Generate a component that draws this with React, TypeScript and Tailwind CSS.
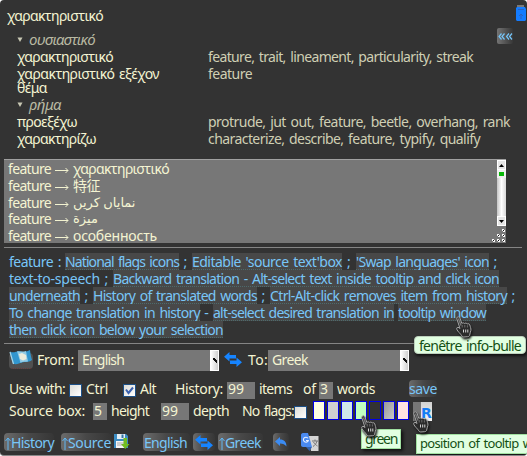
import { useLayoutEffect, useRef } from "react";
import type { ReactNode } from "react";

/** One line of text, tracked so that it fills the width of its box. */
function Fit({ className = "", children }: { className?: string; children: string }) {
  const box = useRef<HTMLSpanElement>(null);
  const inner = useRef<HTMLSpanElement>(null);
  useLayoutEffect(() => {
    const b = box.current;
    const t = inner.current;
    if (!b || !t) return;
    t.style.letterSpacing = "0px";
    const gap = b.getBoundingClientRect().width - t.getBoundingClientRect().width;
    t.style.letterSpacing = `${gap / children.length}px`;
  }, [children]);
  return (
    <span ref={box} className={`block h-[17px] shrink-0 whitespace-pre leading-[17px] [word-spacing:1.5px] ${className}`}>
      <span ref={inner}>{children}</span>
    </span>
  );
}

function Entry({ word, width, children }: { word: string; width: string; children?: ReactNode }) {
  return (
    <div className="flex h-[17px] pl-[17px]">
      <div className="w-[191px] shrink-0">
        <Fit className={width}>{word}</Fit>
      </div>
      <div className="text-[#cfcfb4]">{children}</div>
    </div>
  );
}

function Group({ name, width }: { name: string; width: string }) {
  return (
    <div className="flex h-[17px] items-center pl-[17px] text-[#b9b9a2]">
      <svg className="mr-[6px] h-[5px] w-[6px]" viewBox="0 0 6 5">
        <path d="M.5 .5h5L3 5z" fill="#c8c8b4" />
      </svg>
      <Fit className={`text-[15px] italic ${width}`}>{name}</Fit>
    </div>
  );
}

function HistoryLine({ children }: { children: ReactNode }) {
  return (
    <div className="flex h-[16.8px] items-start pl-1">
      <Fit className="w-[43px]">feature</Fit>
      <svg className="mt-[6px] mr-1 ml-1 h-[8px] w-[14px] shrink-0" viewBox="0 0 14 8">
        <path d="M0 4.5h13M10.500 2l2.500 2.500L10.500 7" fill="none" stroke="#f2f2d0" />
      </svg>
      {children}
    </div>
  );
}

function Mark({ width, children }: { width: string; children: string }) {
  return (
    <Fit className={`border-b border-dotted border-[#4d6a6c] bg-[#484848] ${width}`}>{children}</Fit>
  );
}

function Sep({ width, children }: { width: string; children: string }) {
  return <span className={`block h-[17px] shrink-0 text-center leading-[17px] ${width}`}>{children}</span>;
}

function Swap({ className = "" }: { className?: string }) {
  return (
    <svg className={`h-[15px] w-[18px] shrink-0 ${className}`} viewBox="0 0 18 15">
      <path d="M0 4.8 5.5 0v3H12v3.6H5.5v3z" fill="#1684ff" />
      <path d="M18 10.2 12.5 5.4v3H6V12h6.5v3z" fill="#1684ff" />
    </svg>
  );
}

function Check({ on = false }: { on?: boolean }) {
  return (
    <span className="block size-[13px] shrink-0 border border-[#1c4f86] bg-linear-to-br from-[#dcdcd8] to-white">
      {on && (
        <svg className="size-[11px]" viewBox="0 0 11 11">
          <path d="M2 4.5 4.5 8 9 2.5" fill="none" stroke="#3a62b0" strokeWidth="2" />
        </svg>
      )}
    </span>
  );
}

function Picker({ label, width }: { label: string; width: string }) {
  return (
    <div className="flex h-[21px] w-[141px] shrink-0 bg-[#777] pl-1">
      <div className="flex-1 pt-px">
        <Fit className={width}>{label}</Fit>
      </div>
      <div className="flex w-[9px] items-center justify-center border border-white bg-linear-to-r from-white to-[#d0d0d0]">
        <svg className="h-[5px] w-[4px]" viewBox="0 0 4 5">
          <path d="M0 0h2v1h1v1h1v3H3V4H2V3H1V2H0z" fill="#111" />
        </svg>
      </div>
    </div>
  );
}

function Field({ width, textWidth, children }: { width: string; textWidth: string; children: string }) {
  return (
    <div className={`h-[17px] shrink-0 bg-[#777] pl-px ${width}`}>
      <Fit className={textWidth}>{children}</Fit>
    </div>
  );
}

const chip =
  "flex shrink-0 items-center rounded-[4px] bg-linear-to-r from-[#6c6c6c] via-[#484848] to-[#363636] text-[#78c6f8]";

function Button({ width, textWidth, up = false, children }: { width: string; textWidth: string; up?: boolean; children: string }) {
  return (
    <div className={`${chip} h-[18px] pl-px ${width}`}>
      {up && (
        <svg className="mt-[2px] h-[13px] w-[6px] shrink-0" viewBox="0 0 6 13">
          <path d="M3 13V1M.5 4 3 1l2.5 3" fill="none" stroke="#62b8f4" />
        </svg>
      )}
      <Fit className={textWidth}>{children}</Fit>
    </div>
  );
}

function Hand({ className }: { className: string }) {
  return (
    <svg className={`absolute h-[22px] w-[17px] drop-shadow-[1px_2px_1px_#111] ${className}`} viewBox="0 0 17 22">
      <path
        d="M1.3 1.2c1-.8 2.2-.2 2.6.9l2 5.4c.8-.9 2.1-.8 2.7.1.9-.8 2.1-.5 2.6.4 1-.6 2.3-.2 2.6 1 .5 1.700 1.400 3.600 1.100 5.400-.3 2-1.200 2.900-1.200 4.600 0 1-.8 1.500-2 1.700l-4 .3c-1 0-1.500-.4-1.900-1.200C4.500 17.500 1.600 15.700.8 13.300c-.5-1.500.8-2.600 2.200-1.600l1 .8L1 3.400c-.3-.9-.3-1.700.3-2.200z"
        fill="#2b2b2b"
        stroke="#a8a8a8"
        strokeWidth="1"
      />
      <path d="M6.200 9v2.500M8.800 9v2.500M11.400 9.300v2.200" stroke="#888" strokeWidth=".7" />
      <path d="M7.500 13.500v3M9.700 13.500v3M11.800 13.500v3" stroke="#e8e8e8" strokeWidth=".9" />
      <path d="m2.400 2.500 2.600 7" stroke="#777" strokeWidth="1.400" />
    </svg>
  );
}

function FlagIcon() {
  return (
    <svg className="h-[20px] w-[24px] shrink-0" viewBox="0 0 24 20">
      <rect y="3" width="24" height="16" rx="4" fill="#505050" />
      <path d="M3 18.500h20" stroke="#703030" strokeWidth=".7" strokeDasharray="1 1" />
      <path d="M1 1.500C5 4 8 0 12 1.500S18 1 21 0c.4 4 1.200 7 2 10-4 3-7 1.500-10 2.500S7 15 4 13.500C2.500 10 1.500 6 1 1.500z" fill="#3296ce" />
      <path d="M8 1.300C12 1.500 14 2 17 1l2 10.500c-3 .5-5 0-7.500 1.200z" fill="#91cbe5" />
      <path d="m10 4 3-1 4 2 .5 4-3.500 1.500-3-1.500z" fill="#ececdc" />
      <path d="m1 2 3.500 12" stroke="#a9d5e6" strokeWidth="1.200" />
    </svg>
  );
}

function DiskIcon() {
  return (
    <svg className="h-[17px] w-[16px] shrink-0" viewBox="0 0 16 17">
      <path d="M0 1h12l2 2v12H0z" fill="#3c8cc2" />
      <path d="M3 1h8v5H3z" fill="#e4eef5" />
      <path d="M7.500 1.500h2v3.500h-2z" fill="#3474a4" />
      <path d="M2 8h10v7H2z" fill="#f5f5f5" />
      <path d="M3 10h7M3 12h7" stroke="#aaa" />
      <path d="M9.500 5h3.500v6h2.500L11.200 16 7 11h2.500z" fill="#72bd22" />
    </svg>
  );
}

function TranslateIcon() {
  return (
    <svg className="h-[19px] w-[18px] shrink-0" viewBox="0 0 18 19">
      <path d="M7 3h10.500v15H10z" fill="#d5d5d5" />
      <path d="M11 8h6M14 6.500V8M16 8c-.8 3-2.500 4.500-4 5.500M12.500 9c1 2 2.500 3 4 4" fill="none" stroke="#777" />
      <path d="M0 2c0-1 .7-2 2-2h5l4 14H2c-1.200 0-2-.7-2-2z" fill="#4a8af0" />
      <path d="m5 14 6 0-2.500 4z" fill="#3463ad" />
      <path d="M7 5.300A2.500 2.500 0 1 0 7.300 7.500H5" fill="none" stroke="#e8f0ff" strokeWidth="1.100" />
    </svg>
  );
}

function Swatch({ className }: { className: string }) {
  return <span className={`block h-[19px] w-[12px] shrink-0 border border-[#0000e8] ${className}`} />;
}

export default function App() {
  return (
    <div className="relative flex h-[456px] w-[527px] flex-col overflow-hidden rounded-[4px] border-b border-[#888] bg-[#333] font-['Noto_Sans','Noto_Sans_CJK_SC','DejaVu_Sans',sans-serif] text-[14px] text-[#f4f4d2]">
      <div className="h-[159px] shrink-0 pt-[7px]">
        <div className="h-6 pl-[7px]">
          <Fit className="w-[96px]">χαρακτηριστικό</Fit>
        </div>
        <Group name="ουσιαστικό" width="w-[66px]" />
        <Entry word="χαρακτηριστικό" width="w-[96px]">
          <Fit className="w-[265px]">feature, trait, lineament, particularity, streak</Fit>
        </Entry>
        <Entry word="χαρακτηριστικό εξέχον" width="w-[142px]">
          <Fit className="w-[44px]">feature</Fit>
        </Entry>
        <div className="-mt-[3px]">
          <Entry word="θέμα" width="w-[30px]" />
        </div>
        <Group name="ρήμα" width="w-[32px]" />
        <Entry word="προεξέχω" width="w-[60px]">
          <Fit className="w-[302px]">protrude, jut out, feature, beetle, overhang, rank</Fit>
        </Entry>
        <Entry word="χαρακτηρίζω" width="w-[79px]">
          <Fit className="w-[272px]">characterize, describe, feature, typify, qualify</Fit>
        </Entry>
      </div>

      <div className="ml-1 flex h-[84px] w-[502px] shrink-0 border-t border-[#a0a0a0] bg-[#777]">
        <div className="flex-1">
          <HistoryLine><Fit className="w-[96px]">χαρακτηριστικό</Fit></HistoryLine>
          <HistoryLine><Fit className="w-[27px]">特征</Fit></HistoryLine>
          <HistoryLine><span dir="rtl" className="block leading-[17px] text-[13px]">نمایاں کریں</span></HistoryLine>
          <HistoryLine><span dir="rtl" className="block leading-[17px] text-[13px]">ميزة</span></HistoryLine>
          <HistoryLine><Fit className="w-[84px]">особенность</Fit></HistoryLine>
        </div>
        <div className="flex w-[14px] flex-col items-end">
          <div className="flex h-[66px] w-[9px] flex-col bg-linear-to-r from-[#c4c4c4] via-white to-[#d8d8d8]">
            <div className="flex h-[10px] items-center justify-center border border-white bg-[#e6e6e6]">
              <svg className="h-[3px] w-[5px]" viewBox="0 0 5 3"><path d="M0 3 2.500 0 5 3z" /></svg>
            </div>
            <div className="flex h-[8px] items-center justify-center bg-[#f0f0f0]">
              <span className="h-1 w-[5px] bg-[#08b808]" />
            </div>
            <div className="flex-1" />
            <div className="flex h-[10px] items-center justify-center border border-white bg-[#e6e6e6]">
              <svg className="h-[3px] w-[5px]" viewBox="0 0 5 3"><path d="M0 0h5L2.500 3z" /></svg>
            </div>
          </div>
          <svg className="mt-[3px] h-[14px] w-[14px]" viewBox="0 0 14 14">
            {[[10, 0], [5, 5], [10, 5], [0, 10], [5, 10], [10, 10]].map(([x, y]) => (
              <g key={`${x}-${y}`}>
                <rect x={x} y={y} width="2" height="2" fill="#f8f8f8" />
                <rect x={x + 1} y={y + 1} width="2" height="2" fill="#f8f8f8" />
                <rect x={x + 1} y={y + 1} width="1" height="1" fill="#111" />
              </g>
            ))}
          </svg>
        </div>
      </div>

      <div className="mt-1 ml-1 flex h-[97px] w-[518px] shrink-0 flex-col border-y border-[#858585] pt-[5px] pl-[5px] text-[#78c6f8]">
        <div className="flex h-[17px]">
          <Fit className="w-[52px]">feature :</Fit>
          <span className="w-1" />
          <Mark width="w-[114px]">National flags icons</Mark>
          <Sep width="w-[13px]">;</Sep>
          <Mark width="w-[150px]">Editable 'source text'box</Mark>
          <Sep width="w-[14px]">;</Sep>
          <Mark width="w-[133px]">'Swap languages' icon</Mark>
          <Sep width="w-[13px]">;</Sep>
        </div>
        <div className="flex h-[17px]">
          <Fit className="w-[91px]">text-to-speech</Fit>
          <Sep width="w-[13px]">;</Sep>
          <Mark width="w-[386px]">Backward translation - Alt-select text inside tooltip and click icon</Mark>
        </div>
        <div className="flex h-[17px]">
          <Mark width="w-[71px]">underneath</Mark>
          <Sep width="w-[13px]">;</Sep>
          <Mark width="w-[164px]">History of translated words</Mark>
          <Sep width="w-[13px]">;</Sep>
          <Mark width="w-[237px]">Ctrl-Alt-click removes item from history</Mark>
          <Sep width="w-[13px]">;</Sep>
        </div>
        <div className="flex h-[17px]">
          <Mark width="w-[191px]">To change translation in history</Mark>
          <Sep width="w-[13px]">-</Sep>
          <Mark width="w-[181px]">alt-select desired translation in</Mark>
          <span className="w-1" />
          <Mark width="w-[88px]">tooltip window</Mark>
        </div>
        <div className="flex h-[17px]">
          <Mark width="w-[214px]">then click icon below your selection</Mark>
        </div>
      </div>

      <div className="mt-[6px] flex h-[21px] shrink-0 pl-[9px]">
        <FlagIcon />
        <Fit className="mt-px ml-1 w-[37px]">From:</Fit>
        <span className="w-1" />
        <Picker label="English" width="w-[42px]" />
        <Swap className="mt-[2px] ml-[5px]" />
        <Fit className="mt-px ml-[6px] w-[20px]">To:</Fit>
        <Picker label="Greek" width="w-[36px]" />
      </div>

      <div className="mt-[9px] flex h-[17px] shrink-0 pl-[9px]">
        <Fit className="w-[56px]">Use with:</Fit>
        <span className="mt-1 ml-1"><Check /></span>
        <Fit className="ml-1 w-[22px]">Ctrl</Fit>
        <span className="mt-1 ml-[15px]"><Check on /></span>
        <Fit className="ml-1 w-[16px]">Alt</Fit>
        <Fit className="ml-[19px] w-[48px]">History:</Fit>
        <div className="mt-[2px] ml-1 flex">
          <Field width="w-[28px]" textWidth="w-[16px] -mt-[2px]">99</Field>
        </div>
        <Fit className="ml-1 w-[33px]">items</Fit>
        <Fit className="ml-[11px] w-[13px]">of</Fit>
        <div className="mt-[2px] ml-[3px] flex">
          <Field width="w-[14px]" textWidth="w-[8px] -mt-[2px]">3</Field>
        </div>
        <Fit className="ml-1 w-[38px]">words</Fit>
        <div className={`${chip} ml-[34px] h-[17px] w-[28px]`}>
          <Fit className="w-[28px]">save</Fit>
        </div>
      </div>

      <div className="mt-[4px] flex h-[21px] shrink-0 pl-[9px]">
        <Fit className="mt-px w-[76px]">Source box:</Fit>
        <div className="mt-[2px] ml-2 flex">
          <Field width="w-[14px]" textWidth="w-[8px] -mt-px">5</Field>
        </div>
        <Fit className="mt-px ml-1 w-[38px]">height</Fit>
        <div className="mt-[2px] ml-3 flex">
          <Field width="w-[28px]" textWidth="w-[16px] -mt-px">99</Field>
        </div>
        <Fit className="mt-px ml-1 w-[36px]">depth</Fit>
        <Fit className="mt-px ml-[13px] w-[52px]">No flags:</Fit>
        <span className="mt-[5px]"><Check /></span>
        <div className="ml-[6px] flex gap-[2px]">
          <Swatch className="bg-[#ffffe1]" />
          <Swatch className="bg-[#d0d0d0]" />
          <Swatch className="bg-[#d0e8ea]" />
          <Swatch className="bg-[#c0ffc0]" />
          <Swatch className="bg-[#333]" />
          <Swatch className="bg-linear-to-br from-[#999] to-[#c8c8c8]" />
          <Swatch className="bg-[#ffe1e1]" />
        </div>
        <div className="mt-px ml-1 flex h-[19px] w-[19px] bg-[#777] pl-2">
          <span className="h-[19px] w-[11px] bg-linear-to-b from-[#d2d2d2] to-[#f4f4f4] font-['DejaVu_Sans'] text-[14px] leading-[22px] font-bold text-[#147cf4]">R</span>
        </div>
      </div>

      <div className="mt-[11px] flex h-[19px] shrink-0 pl-1">
        <Button up width="w-[50px]" textWidth="w-[43px]">History</Button>
        <span className="w-[7px]" />
        <Button up width="w-[50px]" textWidth="w-[43px]">Source</Button>
        <span className="w-[3px]" />
        <DiskIcon />
        <span className="w-[13px]" />
        <Button width="w-[47px] pl-[2px]" textWidth="w-[43px]">English</Button>
        <div className={`${chip} ml-[3px] h-[18px] w-[22px] justify-center`}><Swap /></div>
        <span className="w-[3px]" />
        <Button up width="w-[45px]" textWidth="w-[36px]">Greek</Button>
        <div className={`${chip} ml-[10px] h-[18px] w-[16px] justify-center`}>
          <svg className="h-[10px] w-[12px]" viewBox="0 0 12 10">
            <path d="M0 4.500 5 0v2.500c4 0 6.500 2.500 6.500 7C10 7.500 8 6.500 5 6.500V9z" fill="#3b8cf4" />
          </svg>
        </div>
        <span className="w-3" />
        <TranslateIcon />
      </div>

      <div className="absolute top-[28px] left-[497px] flex h-[16px] w-[16px] items-center justify-center rounded-[2px] bg-linear-to-r from-[#747474] to-[#373737]">
        <svg className="h-[7px] w-[15px]" viewBox="0 0 15 7">
          <path d="M3.500 .5 1 3.500l2.500 3M6.500 .5 4 3.500l2.500 3M11 .5 8.500 3.500l2.500 3M14 .5 11.500 3.500l2.500 3" fill="none" stroke="#74c4f8" strokeWidth="1.200" />
        </svg>
      </div>
      <svg className="absolute top-[5px] left-[516px] h-[16px] w-[10px]" viewBox="0 0 10 16">
        <path d="M1 0h7v3H1z" fill="#777" />
        <path d="M1 2h8l1 2v11l-1 1H1l-1-1V3z" fill="#147cff" />
        <path d="M2 4.500h6M5 14V9M3 11l2-2 2 2" fill="none" stroke="#2a63c0" />
      </svg>

      <div className="absolute top-[336px] left-[414px] h-[18px] w-[112px] rounded-[4px] border border-[#bcd0bc] bg-[#e1ffe1] pl-1 text-[#145014] shadow-[1px_2px_3px_#111]">
        <Fit className="w-[102px]">fenêtre info-bulle</Fit>
      </div>
      <div className="absolute top-[429px] left-[361px] h-[20px] w-[40px] border border-[#a0e0a0] bg-[#e1ffe1] pl-[3px] text-[#145014] shadow-[2px_2px_3px_#111]">
        <Fit className="w-[32px]">green</Fit>
      </div>
      <div className="absolute top-[434px] left-[416px] h-[20px] w-[125px] border border-[#a0e0a0] bg-[#e1ffe1] pl-[3px] text-[13px] text-[#145014] shadow-[1px_2px_3px_#111]">
        <Fit className="w-[115px]">position of tooltip wi</Fit>
      </div>
      <Hand className="top-[316px] left-[456px]" />
      <Hand className="top-[415px] left-[361px]" />
      <Hand className="top-[411px] left-[413px]" />
    </div>
  );
}
